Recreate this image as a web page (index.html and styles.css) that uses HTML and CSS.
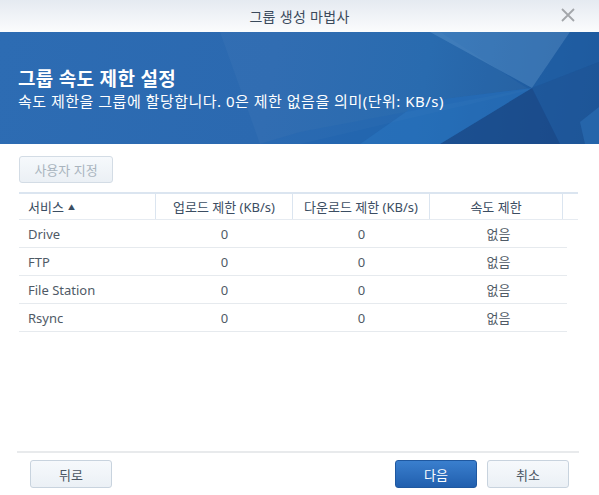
FILE: index.html
```html
<!DOCTYPE html>
<html lang="ko">
<head>
<meta charset="utf-8">
<link rel="stylesheet" href="styles.css">
</head>
<body>
<div class="dialog">
  <div class="titlebar">
    <span class="title">그룹 생성 마법사</span>
    <svg class="close" width="14" height="14" viewBox="0 0 14 14"><path d="M1 1L13 13M13 1L1 13" stroke="#a3a6aa" stroke-width="1.8" fill="none"/></svg>
  </div>
  <div class="banner">
    <svg class="facets" width="599" height="112" viewBox="0 0 599 112" preserveAspectRatio="none">
      <polygon points="220,0 440,0 530,58 300,112 260,112" fill="#ffffff" fill-opacity="0.03"/>
      <polygon points="430,0 570,0 532,56" fill="#6aa0d4" fill-opacity="0.35"/>
      <polygon points="570,0 599,0 599,30 532,56" fill="#1f5fa6" fill-opacity="0.5"/>
      <polygon points="532,56 599,30 599,112 560,112" fill="#1e5597" fill-opacity="0.6"/>
      <polygon points="532,56 560,112 440,112" fill="#173f7c" fill-opacity="0.55"/>
      <polygon points="532,56 440,112 360,112 420,70" fill="#2a78c6" fill-opacity="0.45"/>
      <polygon points="260,112 360,112 420,70 532,56 300,100" fill="#1f64b2" fill-opacity="0.35"/>
      <polygon points="580,90 599,75 599,112 585,112" fill="#2b6fb6" fill-opacity="0.6"/>
    </svg>
    <div class="banner-text">
      <h1>그룹 속도 제한 설정</h1>
      <p>속도 제한을 그룹에 할당합니다. 0은 제한 없음을 의미(단위: KB/s)</p>
    </div>
  </div>
  <div class="content">
    <div class="toolbar"><button class="btn disabled">사용자 지정</button></div>
    <div class="grid">
      <div class="row head">
        <div class="cell left">서비스 <span class="sort">▲</span></div>
        <div class="cell">업로드 제한 (KB/s)</div>
        <div class="cell">다운로드 제한 (KB/s)</div>
        <div class="cell">속도 제한</div>
        <div class="cell spacer"></div>
      </div>
      <div class="row body">
        <div class="cell left">Drive</div><div class="cell">0</div><div class="cell">0</div><div class="cell">없음</div>
      </div>
      <div class="row body">
        <div class="cell left">FTP</div><div class="cell">0</div><div class="cell">0</div><div class="cell">없음</div>
      </div>
      <div class="row body">
        <div class="cell left">File Station</div><div class="cell">0</div><div class="cell">0</div><div class="cell">없음</div>
      </div>
      <div class="row body">
        <div class="cell left">Rsync</div><div class="cell">0</div><div class="cell">0</div><div class="cell">없음</div>
      </div>
    </div>
  </div>
  <div class="footer">
    <button class="btn">뒤로</button>
    <div class="right">
      <button class="btn primary">다음</button>
      <button class="btn">취소</button>
    </div>
  </div>
</div>
</body>
</html>
```
FILE: styles.css
```css
* { box-sizing: border-box; }
html, body { margin: 0; padding: 0; }
body {
  width: 599px;
  height: 495px;
  background: #ffffff;
  font-family: "Noto Sans", "Noto Sans CJK KR", sans-serif;
  font-size: 13px;
  color: #4f5a66;
  overflow: hidden;
}
.dialog { width: 599px; height: 495px; display: flex; flex-direction: column; }
.titlebar {
  height: 32px;
  flex: none;
  background: linear-gradient(#e5eaf1, #fbfcfd);
  display: flex;
  align-items: center;
  justify-content: center;
  position: relative;
}
.title { font-size: 14px; color: #3a4a5c; letter-spacing: 0.3px; }
.close { position: absolute; right: 24px; top: 8px; }
.banner {
  height: 112px;
  flex: none;
  position: relative;
  background: linear-gradient(100deg, #2d6cb3 0%, #2b69b0 45%, #2367ad 70%, #1d5598 100%);
  overflow: hidden;
}
.facets { position: absolute; left: 0; top: 0; }
.banner-text { position: relative; padding: 35px 18px 0; color: #ffffff; }
.banner-text h1 { margin: 0; font-size: 19px; font-weight: 700; line-height: 24px; letter-spacing: 0.3px; }
.banner-text p { margin: 0; font-size: 15px; line-height: 20px; letter-spacing: 0.5px; }
.content { flex: 1; padding: 12px 21px 0 19px; }
.toolbar { height: 36px; }
.btn {
  font-family: "Noto Sans", "Noto Sans CJK KR", sans-serif;
  font-size: 13px;
  height: 28px;
  width: 82px;
  border: 1px solid #c8d3de;
  border-radius: 3px;
  background: linear-gradient(#f6f9fc, #ebf0f5);
  color: #4b5663;
  padding: 0;
}
.btn.disabled { width: 94px; height: 27px; color: #a9b4be; border-color: #d3dce5; }
.grid { width: 559px; }
.row { display: grid; grid-template-columns: 137px 137px 137px 133px 15px; }
.row.head { height: 28px; border-top: 2px solid #dbe5f0; border-bottom: 1px solid #e6ebf1; }
.row.head .cell { border-right: 1px solid #dbe5f0; color: #3b4d62; }
.row.head .cell.spacer { border-right: none; }
.row.body { height: 28px; width: 548px; grid-template-columns: 137px 137px 137px 137px; border-bottom: 1px solid #e6eaee; }
.cell {
  display: flex;
  align-items: center;
  justify-content: center;
  padding: 0 9px;
  white-space: nowrap;
}
.cell.left { justify-content: flex-start; }
.sort { font-size: 7px; color: #3b4d62; margin-left: 4px; margin-top: 1px; }
.footer {
  flex: none;
  height: 44px;
  margin: 0 20px 0 17px;
  border-top: 2px solid #e8eaec;
  display: flex;
  align-items: flex-start;
  justify-content: space-between;
  padding: 7px 10px 0 13px;
}
.right { display: flex; gap: 10px; }
.btn.primary {
  background: linear-gradient(#3a7fce, #215fae);
  border-color: #1f58a0;
  color: #ffffff;
}
```
